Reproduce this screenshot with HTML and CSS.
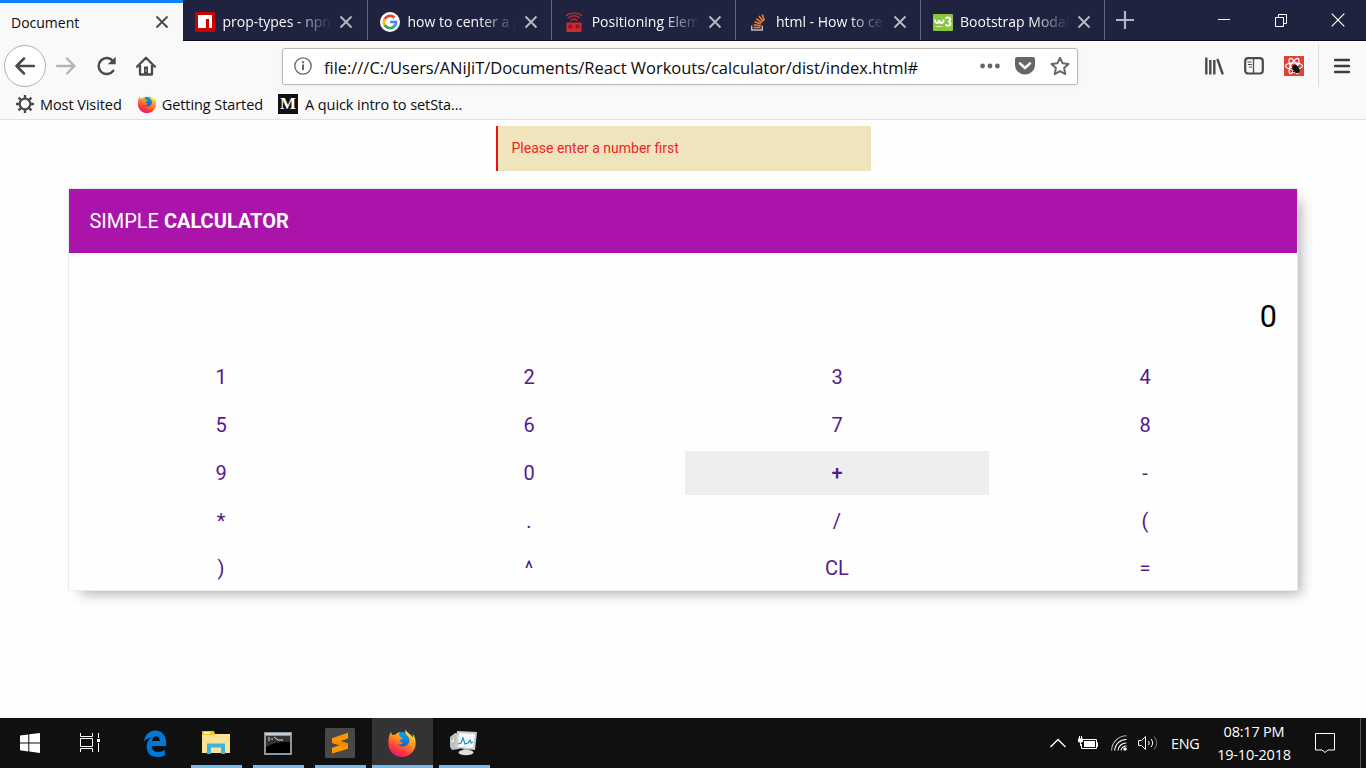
FILE: index.html
```html
<!DOCTYPE html>
<html lang="en">
<head>
<meta charset="utf-8">
<title>Document</title>
<link rel="stylesheet" href="styles.css">
</head>
<body>
<svg width="0" height="0" class="defs">
  <defs>
    <linearGradient id="flame" x1="0.8" y1="0" x2="0.3" y2="1"><stop offset="0" stop-color="#fff44f"/><stop offset=".4" stop-color="#ff9a1e"/><stop offset=".75" stop-color="#ff3b3b"/><stop offset="1" stop-color="#e31587"/></linearGradient>
    <linearGradient id="globe" x1="0" y1="0" x2="0" y2="1"><stop offset="0" stop-color="#00a8f0"/><stop offset="1" stop-color="#2b3fae"/></linearGradient>
    <symbol id="close" viewBox="0 0 14 14"><path d="M1.5 1.5l11 11M12.5 1.5l-11 11" stroke="currentColor" stroke-width="1.9" fill="none"/></symbol>
    <symbol id="firefox" viewBox="0 0 28 28">
      <circle cx="14" cy="13.5" r="10.5" fill="url(#globe)"/>
      <path d="M17.5.5c-1 3 .5 5 2.500 7 2.500 3 1.500 7-1.500 9s-7 1-8.500-1.500c2 .8 4 .3 5.500-1.500-1.500 0-3.500-.5-4-2 .2-1 2.500-1 3-2.500-1.500-1-3-1-3.500-3-.3-1 .3-2 1-3-2 .3-3.500 1.500-4.500 3-1-.3-2-.3-3 0C3.500 5 3.300 4 3.300 2.800.8 6 .3 10.500.3 14.500.3 22 6.500 28 14 28s13.700-6 13.700-13.500c0-4-1-7-3-9.500.2 1.500.2 2.500 0 3.500C22.500 4.500 18.500 3.500 17.500.5z" fill="url(#flame)"/>
    </symbol>
  </defs>
</svg>

<header class="browser">
  <div class="tabs">
    <div class="tab tab-active"><span class="tab-title">Document</span><svg class="tab-close"><use href="#close"/></svg></div>
    <div class="tab">
      <svg class="favicon" viewBox="0 0 20 20"><path fill="#cb0000" d="M0 0h20v20H0z"/><path fill="#fff" d="M3 3h14v13h-3V7h-3v9H3z"/></svg>
      <span class="tab-title">prop-types - npm</span><svg class="tab-close"><use href="#close"/></svg>
    </div>
    <div class="tab">
      <svg class="favicon" viewBox="0 0 20 20"><circle cx="10" cy="10" r="10" fill="#fff"/><g fill="none" stroke-width="2.700"><path stroke="#ea4335" d="M4.700 7A6.100 6.100 0 0 1 14.400 5.700"/><path stroke="#fbbc05" d="M4.700 13A6.100 6.100 0 0 1 4.700 7"/><path stroke="#34a853" d="M4.700 13A6.100 6.100 0 0 0 14 14.600"/><path stroke="#4285f4" d="M14 14.600A6 6 0 0 0 16.100 10H10.200"/></g></svg>
      <span class="tab-title">how to center a p</span><svg class="tab-close"><use href="#close"/></svg>
    </div>
    <div class="tab">
      <svg class="favicon" viewBox="0 0 20 20"><g fill="none" stroke="#c1272d" stroke-width="1.500"><path d="M2 3.500Q10-1.500 18 3.500M4.200 6.100Q10 1.500 15.800 6.100M6.500 8.700Q10 5.500 13.500 8.700"/></g><rect x="2.500" y="10.500" width="15" height="9.500" rx="1" fill="#cf2a30"/><g fill="none" stroke="#641a2c" stroke-width="1.200"><circle cx="6.500" cy="14.500" r="1.500"/><circle cx="13.500" cy="14.500" r="1.500"/></g></svg>
      <span class="tab-title">Positioning Elem</span><svg class="tab-close"><use href="#close"/></svg>
    </div>
    <div class="tab">
      <svg class="favicon" viewBox="0 0 20 20"><path d="M3.700 13.500V18H14.300V13.500" fill="none" stroke="#bcbbbb" stroke-width="1.400"/><path d="M5.500 15.500h7M5.700 12.800l7 .9M6.500 9.700l6.500 2.200M8.300 6.600l5.600 4M11 4l4.200 5.500M14.300 2.500l2 6" stroke="#f48024" stroke-width="1.600"/></svg>
      <span class="tab-title">html - How to ce</span><svg class="tab-close"><use href="#close"/></svg>
    </div>
    <div class="tab">
      <svg class="favicon" viewBox="0 0 20 20"><rect y="2" width="20" height="17" rx="1" fill="#8cc63f"/><path d="M2 7.500q0 3.500 2 3.500t2.200-3q.1 3 2.200 3t2.200-3.500M12.500 6.500q1.500-1.500 3.500-.8 1.700.8 1 2.500-.5 1.300-2 1.300 2 0 2.400 1.600.4 2-1.500 2.600-2 .5-3.400-1" fill="none" stroke="#fff" stroke-width="1.900"/><path d="M2.500 14.500h7" stroke="#d5edb1"/></svg>
      <span class="tab-title">Bootstrap Modal</span><svg class="tab-close"><use href="#close"/></svg>
    </div>
    <svg class="new-tab" viewBox="0 0 18 18"><path d="M9 0v18M0 9h18" stroke="#b5b5c2" stroke-width="2.200"/></svg>
    <div class="window-buttons">
      <svg viewBox="0 0 14 14"><path d="M1 6.500h12" stroke="#fff"/></svg>
      <svg viewBox="0 0 14 14"><path d="M1.500 4.500h8v9h-8zM4.500 4.500v-3h8v9h-3" fill="none" stroke="#fff"/></svg>
      <svg viewBox="0 0 14 14"><path d="M.7 .7l12.600 12.600M13.300 .7L.7 13.300" stroke="#fff" stroke-width="1.200"/></svg>
    </div>
  </div>

  <nav class="toolbar">
    <div class="back"><svg width="20" height="18" viewBox="0 0 20 18"><path d="M19 9H2M9 1.500L1.500 9 9 16.500" fill="none" stroke="#4a4a4b" stroke-width="2.500" stroke-linecap="round" stroke-linejoin="round"/></svg></div>
    <div class="tool"><svg width="20" height="18" viewBox="0 0 20 18"><path d="M1 9h17M11 1.500L18.500 9 11 16.500" fill="none" stroke="#b4b4b5" stroke-width="2.300" stroke-linecap="round" stroke-linejoin="round"/></svg></div>
    <div class="tool"><svg class="reload" width="20" height="20" viewBox="0 0 20 20"><path d="M16.200 14.700A8 8 0 1 1 16 5.200" fill="none" stroke="#4a4a4b" stroke-width="2.500" stroke-linecap="round"/><path d="M18.700.7v7.600h-8z" fill="#4a4a4b"/></svg></div>
    <div class="tool"><svg width="20" height="20" viewBox="0 0 20 20"><path d="M1 10.800L10 1.700l9 9.100M4 9v9.500h12V9" fill="none" stroke="#4a4a4b" stroke-width="2.300" stroke-linejoin="round" stroke-linecap="round"/><path d="M8 10.500h4V19H8z" fill="#4a4a4b"/><path d="M10 13.500v2" stroke="#ddd"/></svg></div>
    <div class="address">
      <svg width="18" height="18" viewBox="0 0 18 18"><circle cx="9" cy="9" r="8.200" fill="none" stroke="#666" stroke-width="1.300"/><path d="M9 7.500v5.500M9 4.300v2" stroke="#666" stroke-width="2"/></svg>
      <span class="url">file:///C:/Users/ANiJiT/Documents/React Workouts/calculator/dist/index.html#</span>
      <div class="address-actions">
        <svg width="20" height="20" viewBox="0 0 20 20" fill="#666"><circle cx="2.600" cy="10" r="2.400"/><circle cx="10" cy="10" r="2.400"/><circle cx="17.400" cy="10" r="2.400"/></svg>
        <svg width="20" height="20" viewBox="0 0 20 20"><path d="M2 1h16q2 0 2 2v6a10 9.500 0 0 1-20 0V3q0-2 2-2z" fill="#666"/><path d="M5 7.300l5 4.700 5-4.700" fill="none" stroke="#fff" stroke-width="2.500" stroke-linecap="round" stroke-linejoin="round"/></svg>
        <svg width="20" height="20" viewBox="0 0 20 20"><path d="M10 1.800l2.500 5.400 6 .7-4.400 4.100 1.200 6.100L10 15.100 4.700 18.100 5.900 12 1.500 7.900l6-.7z" fill="none" stroke="#666" stroke-width="2" stroke-linejoin="round"/></svg>
      </div>
    </div>
    <div class="extensions">
      <div class="tool"><svg width="20" height="20" viewBox="0 0 20 20"><path d="M2.300 1.500v17M6.300 4v14.500M10.300 4v14.500" stroke="#4a4a4b" stroke-width="2.400"/><path d="M13.400 3l5.400 15.300" stroke="#4a4a4b" stroke-width="2.400"/></svg></div>
      <div class="tool"><svg width="20" height="20" viewBox="0 0 20 20"><rect x="1.200" y="2.200" width="17.600" height="15.300" rx="3" fill="none" stroke="#4a4a4b" stroke-width="2.200"/><path d="M9.500 2v16" stroke="#4a4a4b" stroke-width="1.300"/><path d="M3.500 6h4M4 8.500h4M5 11h3" stroke="#4a4a4b" stroke-width="1.200"/></svg></div>
      <div class="tool"><svg width="20" height="20" viewBox="0 0 20 20"><rect width="20" height="20" fill="#db4437"/><g fill="none" stroke="#fff" stroke-width="1.200"><ellipse cx="10" cy="10" rx="8.500" ry="3.200"/><ellipse cx="10" cy="10" rx="8.500" ry="3.200" transform="rotate(60 10 10)"/><ellipse cx="10" cy="10" rx="8.500" ry="3.200" transform="rotate(120 10 10)"/></g><ellipse cx="12" cy="13" rx="3" ry="4.600" fill="#111" transform="rotate(-35 12 13)"/><path d="M7.500 12.500l8 3.500M9 16l6-6M12.500 9.500l2 7" stroke="#111"/></svg></div>
      <div class="menu"><svg width="16" height="16" viewBox="0 0 16 16"><path d="M1 2h14M1 8h14M1 14h14" stroke="#3d3d3e" stroke-width="2.300" stroke-linecap="round"/></svg></div>
    </div>
  </nav>

  <div class="bookmarks">
    <span class="bookmark"><svg viewBox="0 0 20 20"><g stroke="#4a4a4b" stroke-width="2.400"><path d="M10 1v18M1 10h18M3.600 3.600l12.800 12.800M16.400 3.600L3.600 16.400"/></g><circle cx="10" cy="10" r="5.300" fill="#f9f9fa" stroke="#4a4a4b" stroke-width="2.200"/></svg><b>Most Visited</b></span>
    <span class="bookmark"><svg viewBox="0 0 20 20"><use href="#firefox" x=".7" y=".7" width="18.600" height="18.600"/></svg><b>Getting Started</b></span>
    <span class="bookmark"><i class="medium">M</i><b>A quick intro to setSta...</b></span>
  </div>
</header>

<main class="page">
  <div class="alert">Please enter a number first</div>
  <section class="calculator">
    <h1 class="title">SIMPLE <strong>CALCULATOR</strong></h1>
    <output class="display">0</output>
    <div class="keys">
      <a>1</a><a>2</a><a>3</a><a>4</a>
      <a>5</a><a>6</a><a>7</a><a>8</a>
      <a>9</a><a>0</a><a class="hovered">+</a><a>-</a>
      <a>*</a><a>.</a><a>/</a><a>(</a>
      <a>)</a><a>^</a><a>CL</a><a>=</a>
    </div>
  </section>
</main>

<footer class="taskbar">
  <div class="system"><svg width="20" height="20" viewBox="0 0 20 20" fill="#fff"><path d="M0 2.500L8.300 1.400v8H0zM9.300 1.200L20 0v9.400H9.300zM0 10.400h8.300v8L0 17.300zM9.300 10.400H20V20L9.300 18.600z"/></svg></div>
  <div class="system"><svg width="20" height="20" viewBox="0 0 20 20" fill="none" stroke="#fff"><path d="M.5 0v3.500h12V0M.5 19v-3.500h12V19M.5 5.500h12v8H.5zM18.500 0v5M18.500 10v9"/><path d="M17 6h3v3h-3z" fill="#fff" stroke="none"/></svg></div>
  <div class="apps">
    <div class="app idle"><svg width="24" height="27" viewBox="0 0 26 27" preserveAspectRatio="none"><path d="M1 12C2 4.500 7 .5 13.500.5 21 .5 25 6 25 13v3H9.500c.2 4 3 6 7 6 2.800 0 5.200-.8 7.300-2v5.200C21.500 26.500 18.700 27 15.500 27 8.500 27 4 23 4 16.500c0-4.200 2-7.500 5.800-9.200C6 7.500 3 9.300 1 12zM9.800 11h8.400c0-3-1.300-4.700-4-4.700-2.500 0-4 1.700-4.400 4.700z" fill="#0078d7"/></svg></div>
    <div class="app"><svg width="28" height="24" viewBox="0 0 28 24"><path d="M0 1h11l2 2h15v19H0z" fill="#fce391"/><path d="M0 0h12l1 4H0z" fill="#f6c525"/><path d="M2 1h6v2H2z" fill="#fff5c7"/><path d="M5 12.500h18V23h-4v-6.500H9V23H5z" fill="#39b3e6"/></svg></div>
    <div class="app"><svg width="28" height="23" viewBox="0 0 28 23"><rect width="28" height="23" fill="#8b979e"/><rect x="1" y="1" width="26" height="2" fill="#c9d0d4"/><path d="M2 4h24v17H2z"/><path d="M2 4h24v6Q13 9 2 15z" fill="#333"/><path d="M4 6h2M4 8h2M8 6v2M10 5l4 3h5" stroke="#ddd" fill="none"/></svg></div>
    <div class="app"><svg width="30" height="30" viewBox="0 0 30 30"><rect width="30" height="30" rx="1.500" fill="#484848"/><path d="M7 10.200l16-5.400v5.700l-7.500 2.600 7.500 2.400v5.200L7 25.500v-5.700l7.800-2.600L7 14.900z" fill="#ff9800"/><path d="M15.500 13.100l7.500 2.400-.5 3-7.700-1.300L7.500 15l.5-1.500z" fill="#ef8c00"/></svg></div>
    <div class="app current"><svg width="28" height="28"><use href="#firefox"/></svg></div>
    <div class="app"><svg width="28" height="26" viewBox="0 0 28 26"><path d="M0 7l5-4 4 1v15l-7 1-2-3z" fill="#bfc1c1"/><path d="M1 8h3v4H1z" fill="#dfe3de"/><path d="M1 9h2" stroke="#55b525"/><path d="M7 1l20 1-2 18L5 18z" fill="#cbcdcd"/><path d="M9 3l16 1-2 14-15-1z" fill="#f3f8fb"/><path d="M8 14l3-1 2-5 2 6 3-1 2-3 1 3 2-1" fill="none" stroke="#2589b5" stroke-width="1.200"/><path d="M13 19h7l-1 3h-5z" fill="#999"/><ellipse cx="16" cy="22.500" rx="7.500" ry="2.800" fill="#dcdddd"/></svg></div>
  </div>
  <div class="tray">
    <svg width="16" height="10" viewBox="0 0 16 10"><path d="M.5 9L8 1.500 15.500 9" fill="none" stroke="#fff" stroke-width="1.300"/></svg>
    <svg class="battery" width="20" height="15" viewBox="0 0 20 15"><path d="M5 3.500h13.500v9H3.500V8M18.500 6.500h1v4h-1" fill="none" stroke="#fff"/><path d="M6 5h11v6H6z" fill="#fff"/><path d="M0 2.500h5v3l-1 1H1l-1-1zM1 0h1v3H1zM3 0h1v3H3zM2 6h1v4H2z" fill="#fff"/></svg>
    <svg class="wifi" width="16" height="16" viewBox="0 0 16 16"><g fill="none" stroke="#fff" stroke-width="1.100"><path d="M.6 15.500A15 15 0 0 1 15.500.8" opacity=".7"/><path d="M3.700 15.500A11.500 11.500 0 0 1 15.500 4.500M7 15.500A8 8 0 0 1 15.500 8M10 15.500A5 5 0 0 1 15.500 11"/></g><circle cx="14" cy="14" r="1.700" fill="#fff"/></svg>
    <svg class="sound" width="20" height="18" viewBox="0 0 20 18"><g fill="none" stroke="#fff"><path d="M.6 6.500h3L7.500 2.500v13L3.600 11.500h-3zM10.500 7q1.500 2 0 4M13 5q3.300 4 0 8"/><path d="M16 2.500q5.500 6.500 0 13" opacity=".45"/></g></svg>
    <span class="lang">ENG</span>
    <div class="clock"><span>08:17 PM</span><span>19-10-2018</span></div>
    <svg class="notices" width="20" height="20" viewBox="0 0 20 20"><path d="M.5.5h19v16.500h-6.500L10 19.500 7 17H.5z" fill="none" stroke="#fff"/></svg>
    <i class="show-desktop"></i>
  </div>
</footer>
</body>
</html>
```
FILE: styles.css
```css
* { box-sizing: border-box; }
body {
  margin: 0;
  width: 1366px;
  height: 768px;
  display: flex;
  flex-direction: column;
  overflow: hidden;
  background: #fefefe;
  font-family: "Open Sans", "Noto Sans", sans-serif;
}
svg { display: block; flex: none; }
.defs { position: absolute; }

.browser { height: 120px; background: #f9f9fa; border-bottom: 1px solid #dfdfe0; }

.tabs { display: flex; height: 41px; background: #202340; border-bottom: 1px solid #0c0c2b; }
.tab {
  display: flex;
  align-items: center;
  width: 184.2px;
  flex: none;
  padding: 3px 13px 0 12px;
  border-right: 1px solid #63657a;
  color: #f9f9fa;
  font-size: 14px;
}
.tab-active {
  width: 183px;
  height: 41px;
  padding: 0 14px 0 11px;
  border-top: 3px solid #0a84ff;
  border-right: 0;
  background: #f9f9fa;
  color: #0c0c0d;
}
.tab-active + .tab { width: 185px; padding-right: 14px; }
.favicon { width: 20px; height: 20px; margin-right: 7.500px; }
.tab-title {
  flex: 1;
  overflow: hidden;
  white-space: nowrap;
  margin-right: 7px;
}
.tab:not(.tab-active) .tab-title {
  -webkit-mask-image: linear-gradient(to right, #000 calc(100% - 38px), transparent calc(100% - 1px));
  mask-image: linear-gradient(to right, #000 calc(100% - 38px), transparent calc(100% - 1px));
}
.tab-close { width: 14px; height: 14px; color: #b9b9c4; }
.tab-active .tab-close { color: #4a4a4b; }
.new-tab { width: 18px; height: 18px; margin: 11px 0 0 11px; }
.window-buttons { display: flex; gap: 43px; margin: 13px 21px 0 auto; }
.window-buttons svg { width: 14px; height: 14px; }

.toolbar { display: flex; align-items: center; height: 50px; padding-left: 4px; }
.back {
  display: flex;
  align-items: center;
  justify-content: center;
  width: 42px;
  height: 42px;
  border: 1px solid #b1b1b1;
  border-radius: 50%;
  background: #fff;
}
.tool { display: flex; align-items: center; justify-content: center; width: 40px; height: 42px; }
.reload { margin-left: 1px; }
.address {
  display: flex;
  align-items: center;
  width: 796px;
  height: 37px;
  margin-left: 116px;
  padding: 0 7px 0 11px;
  border: 1px solid #b8b8b9;
  border-radius: 3px;
  background: #fff;
  box-shadow: 0 1px 4px rgba(0, 0, 0, .06);
}
.url { margin: 3px 0 0 12px; font-size: 16.5px; letter-spacing: -0.03px; white-space: nowrap; color: #0c0c0d; }
.address-actions { display: flex; gap: 15px; margin-left: auto; }
.extensions { display: flex; margin-left: auto; }
.menu {
  display: flex;
  align-items: center;
  width: 48px;
  height: 42px;
  margin-left: 4px;
  padding-left: 15px;
  border-left: 1px solid #d9d9da;
}

.bookmarks { display: flex; align-items: center; height: 28px; padding: 0 0 2px 15px; gap: 15px; }
.bookmark { display: flex; align-items: center; gap: 5px; font-size: 14.5px; white-space: nowrap; color: #0c0c0d; }
.bookmark svg { width: 20px; height: 20px; }
.bookmark b { font-weight: 400; letter-spacing: -0.08px; }
.medium {
  width: 20px;
  height: 20px;
  background: #111;
  color: #fff;
  font: bold 17px/20px "Liberation Serif", serif;
  text-align: center;
  margin-right: 2px;
}

.page { flex: 1; font-family: Roboto, sans-serif; }
.alert {
  width: 375px;
  height: 45px;
  margin: 6px 0 0 496px;
  padding-left: 13.500px;
  border-left: 2px solid #e8121b;
  background: #f0e4bc;
  color: #f02329;
  font-size: 14px;
  line-height: 45px;
}
.calculator {
  width: 1230px;
  height: 403px;
  margin: 17px 0 0 68px;
  border: 1px solid #ebebeb;
  background: #fefefe;
  box-shadow: 8px 8px 12px -5px rgba(0, 0, 0, .3);
}
.title {
  height: 64px;
  margin: 0;
  padding-left: 20.400px;
  background: #aa14aa;
  color: #fff;
  font-size: 20px;
  font-weight: 400;
  line-height: 64px;
}
.title strong { font-weight: 700; }
.display {
  display: block;
  height: 102px;
  padding: 43px 20px 0 0;
  font-size: 30.500px;
  line-height: 42px;
  text-align: right;
  color: #000;
}
.keys { display: grid; grid-template-columns: repeat(4, 304px); grid-template-rows: repeat(4, 44px) 42px; gap: 4px; }
.keys a { display: flex; align-items: center; justify-content: center; font-size: 20px; color: #551a8b; }
.keys .hovered { background: #eee; font-weight: 500; }

.taskbar { display: flex; height: 50px; background: #101010; color: #fff; }
.system { display: flex; align-items: center; justify-content: center; width: 60px; }
.apps { display: flex; margin-left: 4px; }
.app {
  display: flex;
  align-items: center;
  justify-content: center;
  width: 51px;
  height: 50px;
  margin: 0 5.500px;
  border-bottom: 3px solid #76b9ed;
  padding-top: 3px;
}
.idle { width: 50px; border-color: transparent; }
.current { width: 61px; margin: 0 .5px; background: #333; }
.tray { display: flex; align-items: center; margin-left: auto; }
.battery { margin-left: 12px; }
.wifi { margin-left: 13px; }
.sound { margin-left: 11px; }
.lang { margin-left: 13px; width: 29px; font-size: 14.400px; letter-spacing: -.3px; }
.clock { display: flex; flex-direction: column; width: 78px; margin-left: 15px; text-align: center; font-size: 14.500px; line-height: 23px; letter-spacing: -.2px; white-space: nowrap; }
.notices { margin-left: 22px; }
.show-desktop { width: 6px; height: 50px; margin-left: 25px; border-left: 1px solid #555; }
```
